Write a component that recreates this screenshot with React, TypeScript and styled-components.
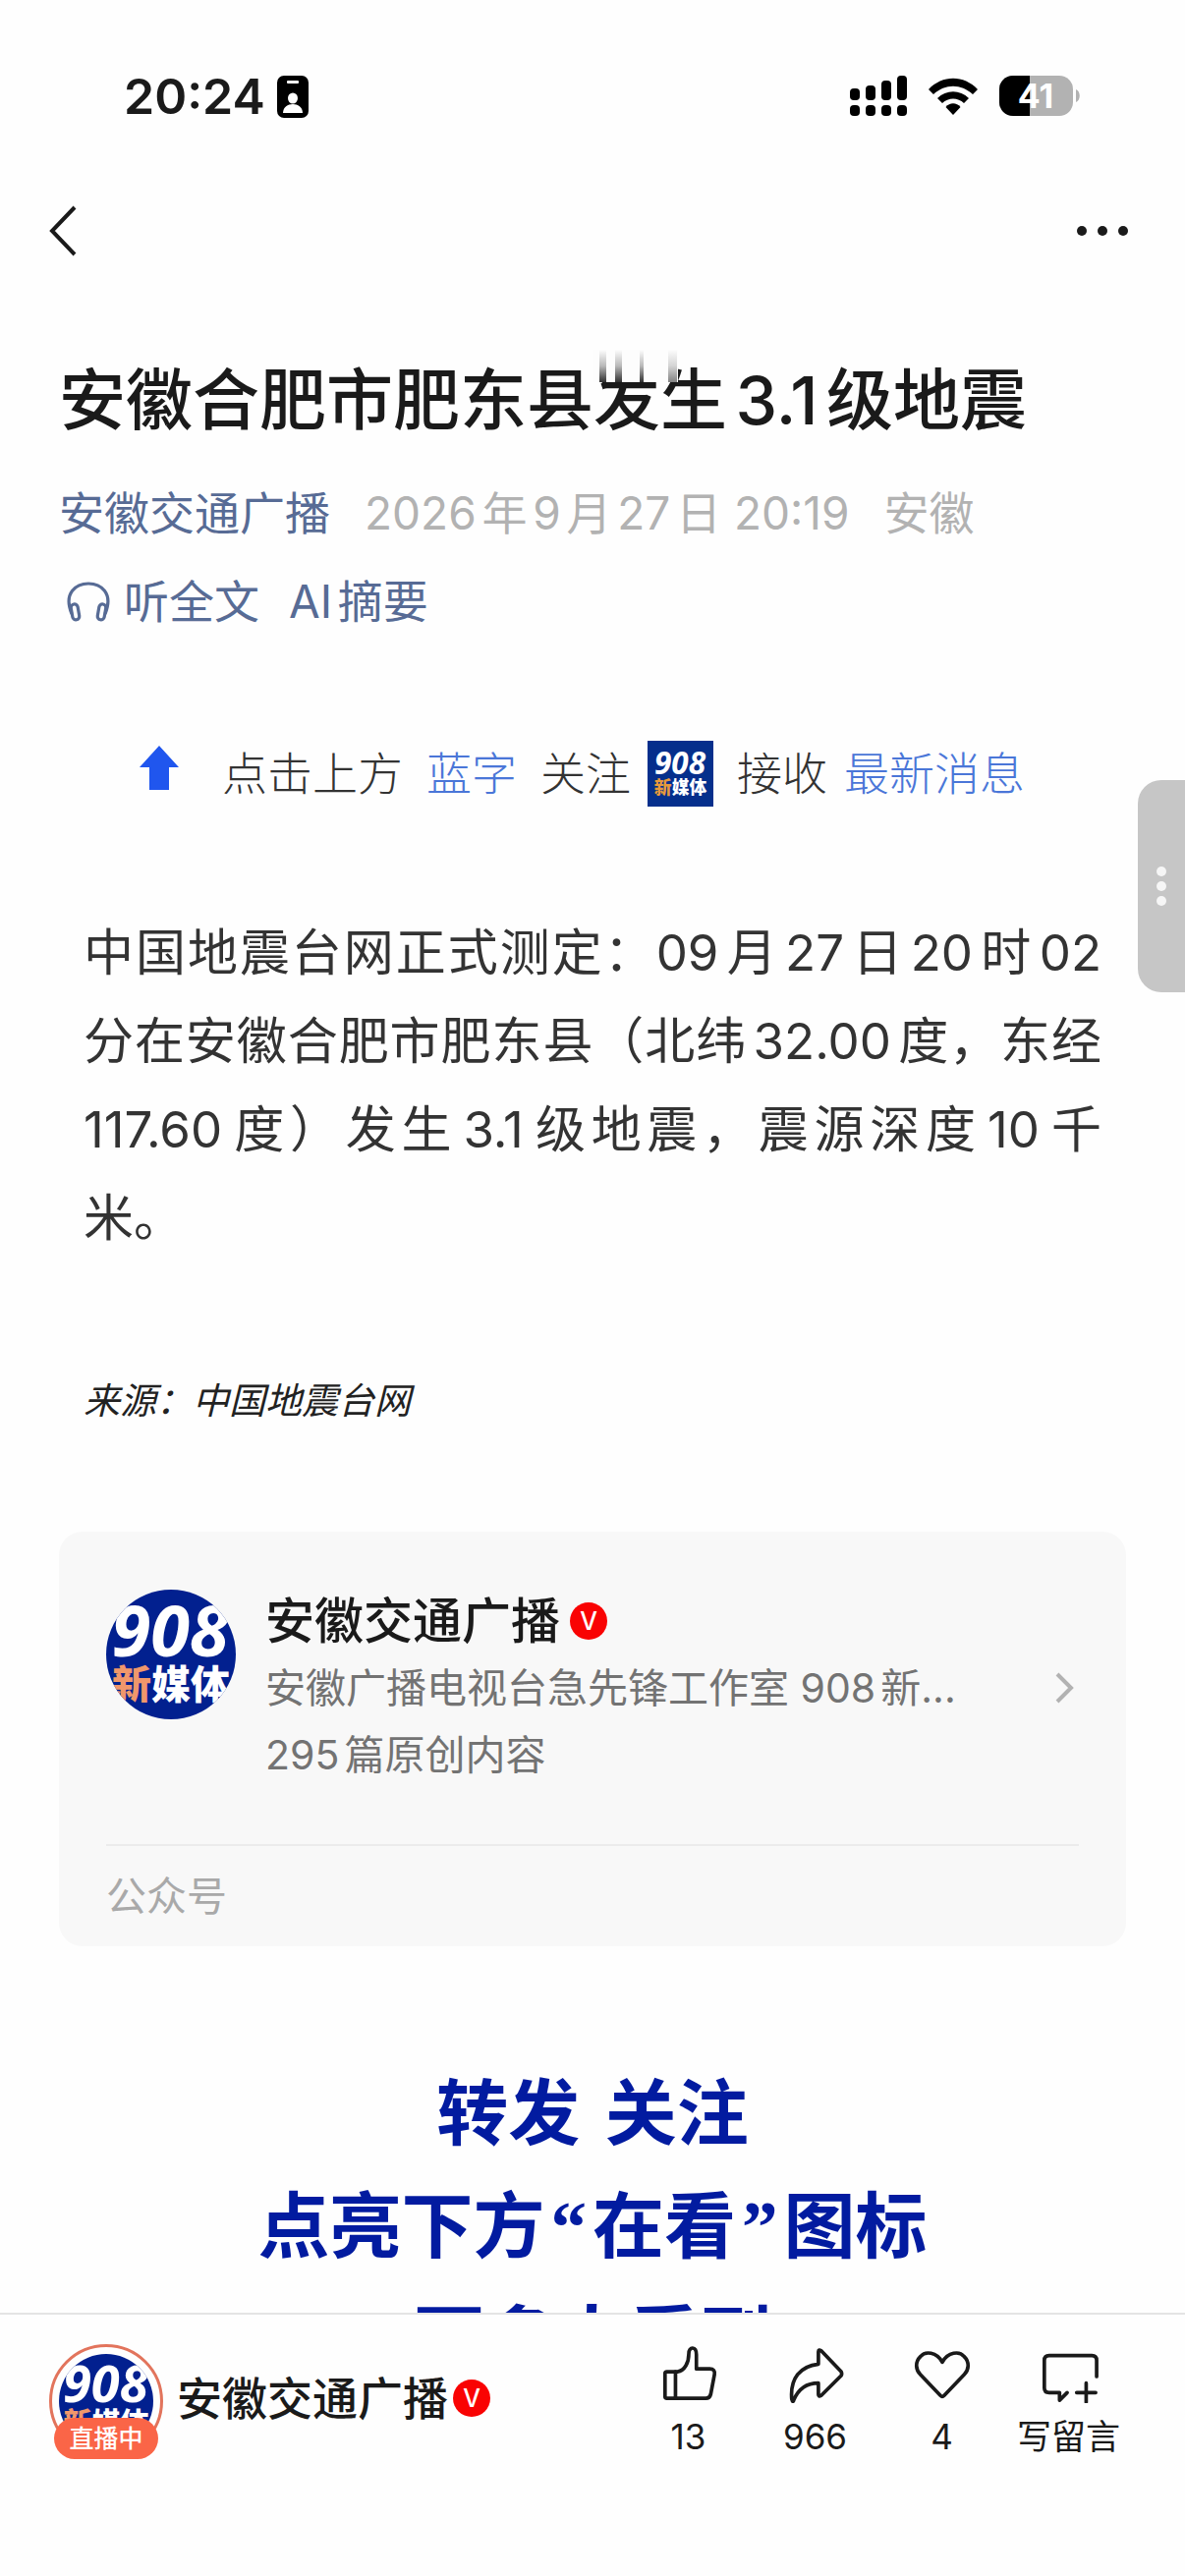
import React from "react";
import styled, { createGlobalStyle } from "styled-components";

const GlobalStyle = createGlobalStyle`
  * { box-sizing: border-box; }
  body {
    margin: 0;
    background: #fefefe;
    color: #1a1a1a;
    font-family: Inter, "Noto Sans CJK SC", sans-serif;
    text-autospace: normal;
  }
  h1, h2, p { margin: 0; font-weight: 400; }
  a { color: inherit; text-decoration: none; }
  button {
    padding: 0;
    border: 0;
    background: none;
    color: inherit;
    font: inherit;
    cursor: pointer;
  }
  svg { display: block; flex: none; }
`;

const Screen = styled.div`
  position: relative;
  display: flex;
  flex-direction: column;
  height: 100vh;
  overflow: hidden;
`;

const StatusBar = styled.div`
  flex: none;
  display: flex;
  align-items: center;
  justify-content: space-between;
  margin-top: 56px;
  padding: 0 106px 0 126px;
  height: 84px;
`;

const StatusGroup = styled.div<{ $gap: number }>`
  display: flex;
  align-items: center;
  gap: ${(p) => p.$gap}px;
`;

const Clock = styled.span`
  font-size: 50px;
  font-weight: 600;
  line-height: 60px;
`;

const NavBar = styled.nav`
  flex: none;
  display: flex;
  align-items: center;
  justify-content: space-between;
  height: 190px;
  padding: 0 48px;
`;

const Scroll = styled.main`
  flex: 1;
  min-height: 0;
  overflow: hidden;
  padding: 34px 60px 0;
`;

const Title = styled.h1`
  position: relative;
  font-size: 68px;
  font-weight: 500;
  line-height: 86px;
  white-space: nowrap;
`;

const Smear = styled.svg`
  position: absolute;
  left: 544px;
  top: -8px;
`;

const Line = styled.div<{ $top: number; $gap: number }>`
  display: flex;
  align-items: center;
  gap: ${(p) => p.$gap}px;
  margin-top: ${(p) => p.$top}px;
  font-size: 46px;
  line-height: 60px;
  white-space: nowrap;
`;

const BlueLink = styled.a`
  color: #576b95;
`;

const Muted = styled.span`
  color: #b2b2b2;
`;

const ToolButton = styled.button`
  display: flex;
  align-items: center;
  gap: 14px;
  color: #576b95;
`;

const Banner = styled.div`
  display: flex;
  align-items: center;
  gap: 24px;
  height: 68px;
  margin-top: 111px;
  padding-left: 82px;
  font-size: 46px;
  line-height: 60px;
  font-weight: 300;
  color: #333;
  white-space: nowrap;
`;

const BannerPair = styled.span`
  display: flex;
  align-items: center;
  gap: 17px;
`;

const Accent = styled.span`
  color: #4a76d8;
`;

const BannerLead = styled.span`
  margin-left: 20px;
`;

const Body = styled.p`
  margin-top: 104px;
  padding: 0 25px;
  font-size: 51px;
  line-height: 90px;
  color: #333;
  text-align: justify;
`;

const Source = styled.p`
  margin-top: 111px;
  padding: 0 25px;
  font-size: 37px;
  font-style: italic;
  line-height: 60px;
  color: #222;
`;

const Card = styled.section`
  margin-top: 103px;
  padding: 0 48px;
  border-radius: 24px;
  background: #f8f8f8;
`;

const CardLink = styled.a`
  display: flex;
  align-items: center;
  padding: 57px 5px 57px 0;
  border-bottom: 2px solid #ebebeb;
`;

const CardAvatar = styled.div`
  align-self: flex-start;
  padding-top: 2px;
`;

const CardText = styled.div`
  flex: 1;
  min-width: 0;
  margin-left: 30px;
  font-size: 41px;
  line-height: 68px;
  color: #737373;
  white-space: nowrap;
`;

const AccountName = styled.h2<{ $size: number; $gap: number }>`
  display: flex;
  align-items: center;
  gap: ${(p) => p.$gap}px;
  font-size: ${(p) => p.$size}px;
  font-weight: 500;
  line-height: 68px;
  color: #1a1a1a;
  white-space: nowrap;
`;

const CardKind = styled.div`
  font-size: 41px;
  line-height: 102px;
  color: #a9a9a9;
`;

const Slogan = styled.p`
  margin-top: 113px;
  font-family: "DejaVu Sans", "Noto Sans CJK SC", sans-serif;
  font-size: 73px;
  font-weight: 700;
  line-height: 115px;
  text-align: center;
  color: #021ba0;
`;

const Quote = styled.span`
  padding: 0 6px;
  font-family: "Liberation Serif", serif;
  line-height: 1;
`;

const BottomBar = styled.footer`
  flex: none;
  display: flex;
  align-items: flex-start;
  justify-content: space-between;
  height: 268px;
  padding: 30px 54px 0 50px;
  border-top: 2px solid #e4e4e4;
`;

const AccountLink = styled.a`
  display: flex;
  align-items: flex-start;
  gap: 14px;
`;

const LiveAvatar = styled.div`
  position: relative;
  display: grid;
  place-items: center;
  width: 116px;
  height: 116px;
  border: 3px solid #e2745c;
  border-radius: 50%;
`;

const LiveBadge = styled.span`
  position: absolute;
  left: 2px;
  right: 2px;
  bottom: -4px;
  border-radius: 21px;
  background: #fa6547;
  color: #fff;
  font-size: 25px;
  font-weight: 500;
  line-height: 42px;
  text-align: center;
`;

const BarName = styled.div`
  padding-top: 21px;
`;

const Actions = styled.div`
  display: grid;
  grid-template-columns: repeat(4, 129px);
`;

const Action = styled.button`
  display: flex;
  flex-direction: column;
  align-items: center;
  gap: 8px;
  font-size: 35px;
  line-height: 52px;
  white-space: nowrap;
`;

const Handle = styled.button`
  position: absolute;
  top: 794px;
  right: 0;
  display: flex;
  flex-direction: column;
  align-items: center;
  justify-content: center;
  gap: 5px;
  width: 48px;
  height: 216px;
  border-radius: 24px 0 0 24px;
  background: #c6c6c6;
`;

const HandleDot = styled.span`
  width: 10px;
  height: 10px;
  border-radius: 50%;
  background: #f6f6f6;
`;

function Logo({ size, square = false }: { size: number; square?: boolean }) {
  const id = "logo-clip-" + size;
  return (
    <svg width={size} height={size} viewBox="0 0 132 132" role="img" aria-label="908新媒体">
      <clipPath id={id}>
        {square ? <rect width="132" height="132" /> : <circle cx="66" cy="66" r="66" />}
      </clipPath>
      <g clipPath={`url(#${id})`}>
        <rect width="132" height="132" fill={square ? "#052f8c" : "#02208f"} />
        <text
          x="65"
          y={square ? 66 : 68}
          textAnchor="middle"
          fontFamily="Open Sans, sans-serif"
          fontStyle="italic"
          fontWeight="700"
          fontSize={square ? 62 : 72}
          fill="#fff"
        >
          908
        </text>
        <text
          x="66"
          y={square ? 107 : 111}
          textAnchor="middle"
          fontFamily="Noto Sans CJK SC, sans-serif"
          fontWeight="900"
          fontSize={square ? 35 : 40}
          fill="#fff"
        >
          <tspan fill={square ? "#e79a3c" : "#f0976b"}>新</tspan>媒体
        </text>
      </g>
    </svg>
  );
}

const VerifiedDot = styled.span`
  display: grid;
  place-items: center;
  width: 38px;
  height: 38px;
  border-radius: 50%;
  background: #f90303;
  color: #fff;
  font-size: 25px;
  font-weight: 500;
  line-height: 38px;
`;

const stroke = {
  fill: "none",
  stroke: "currentColor",
  strokeWidth: 3.8,
  strokeLinecap: "round" as const,
  strokeLinejoin: "round" as const,
};

const actions = [
  {
    label: "13",
    icon: (
      <>
        <path d="M8 29h11c8-1 12-10 12-19 0-8 8-8 8 1v15h14q6 0 5 6l-4 21q-1 4-5 4H8q-2 0-2-2V31q0-2 2-2" />
        <path d="M17 29v28" />
      </>
    ),
  },
  {
    label: "966",
    icon: <path d="M34 21V8q0-3 3-1l21 22q1 2 0 4L37 54q-3 2-3-1V41C22 41 13 47 8 59q-1 3-2-1C4 36 15 23 34 21z" />,
  },
  {
    label: "4",
    icon: <path d="M31 19C25 8 13 7 8 13c-6 6-5 14 0 19l21 22q2 2 4 0l21-22c5-5 6-13 0-19-5-6-17-5-23 6z" />,
  },
  {
    label: "写留言",
    icon: (
      <>
        <path d="M60 34V17q0-5-5-5H10q-5 0-5 5v29q0 5 5 5h11v8l8-8" />
        <path d="M49 41v20M39 51h20" />
      </>
    ),
  },
];

export default function App() {
  return (
    <Screen>
      <GlobalStyle />
      <StatusBar>
        <StatusGroup $gap={12}>
          <Clock>20:24</Clock>
          <svg width="32" height="43" viewBox="0 0 32 43">
            <rect width="32" height="43" rx="7" fill="#000" />
            <rect x="10" y="5" width="12" height="3" rx="1" fill="#fff" />
            <ellipse cx="16" cy="23" rx="5" ry="5.5" fill="#fff" />
            <path d="M6 38c0-12 20-12 20 0z" fill="#fff" />
          </svg>
        </StatusGroup>
        <StatusGroup $gap={22}>
          <svg width="58" height="42" viewBox="0 0 58 42">
            <rect x="0" y="13" width="10" height="12" rx="4" />
            <rect x="16" y="10" width="10" height="15" rx="4" />
            <rect x="32" y="5" width="10" height="20" rx="4" />
            <rect x="48" y="0" width="10" height="25" rx="4" />
            <rect x="0" y="30" width="10" height="11" rx="4" />
            <rect x="16" y="30" width="10" height="11" rx="4" />
            <rect x="32" y="30" width="10" height="11" rx="4" />
            <rect x="48" y="30" width="10" height="11" rx="4" />
          </svg>
          <svg width="50" height="38" viewBox="0 0 50 38">
            <path d="M0 12C14-3 36-3 50 12l-5 5C33 6 17 6 5 17z" />
            <path d="M9 21c9-9 23-9 32 0l-5 5c-6-6-16-6-22 0z" />
            <path d="M17.500 30c4-5 11-5 15 0L25 38z" />
          </svg>
          <svg width="83" height="42" viewBox="0 0 83 42">
            <clipPath id="battery">
              <rect width="75" height="41" rx="14" />
            </clipPath>
            <rect width="75" height="41" rx="14" fill="#b2b2b2" />
            <rect width="31" height="41" clipPath="url(#battery)" />
            <path d="M78 14c5 2 5 11 0 13z" fill="#b2b2b2" />
            <text x="37" y="33" textAnchor="middle" fontSize="34" fontWeight="700" fill="#fff">
              41
            </text>
          </svg>
        </StatusGroup>
      </StatusBar>

      <NavBar>
        <button aria-label="返回">
          <svg width="32" height="54" viewBox="0 0 32 54">
            <path d="M28 3 5 27l23 24" fill="none" stroke="#1a1a1a" strokeWidth="4" />
          </svg>
        </button>
        <button aria-label="更多">
          <svg width="62" height="40" viewBox="0 0 62 40">
            <circle cx="5" cy="20" r="5" fill="#1a1a1a" />
            <circle cx="26" cy="20" r="5" fill="#1a1a1a" />
            <circle cx="47" cy="20" r="5" fill="#1a1a1a" />
          </svg>
        </button>
      </NavBar>

      <Scroll>
        <Title>
          安徽合肥市肥东县发生3.1级地震
          <Smear width="90" height="33" viewBox="0 0 90 33" aria-hidden="true">
            <defs>
              <linearGradient id="smear" x1="0" y1="0" x2="0" y2="1">
                <stop offset="0" stopColor="#1a1a1a" stopOpacity="0" />
                <stop offset="0.5" stopColor="#1a1a1a" stopOpacity="0.3" />
                <stop offset="1" stopColor="#1a1a1a" stopOpacity="0.9" />
              </linearGradient>
            </defs>
            <rect width="86" height="33" fill="#fdfdfd" />
            <rect x="6" width="7" height="33" fill="url(#smear)" />
            <rect x="22" width="7" height="33" fill="url(#smear)" />
            <rect x="47" width="4" height="33" fill="url(#smear)" />
            <rect x="76" width="9" height="33" fill="url(#smear)" opacity="0.6" />
          </Smear>
        </Title>
        <Line $top={42} $gap={35}>
          <BlueLink href="#account">安徽交通广播</BlueLink>
          <Muted>2026年9月27日 20:19</Muted>
          <Muted>安徽</Muted>
        </Line>
        <Line $top={30} $gap={30}>
          <ToolButton>
            <svg width="52" height="42" viewBox="0 0 52 42">
              <g fill="none" stroke="#576b95" strokeWidth="3.200">
                <path d="M13 34C4 12 18 3 30 3s26 9 17 31" />
                <rect x="13" y="24" width="7" height="16" rx="3.500" transform="rotate(-10 16 32)" />
                <rect x="40" y="24" width="7" height="16" rx="3.500" transform="rotate(10 44 32)" />
              </g>
            </svg>
            听全文
          </ToolButton>
          <ToolButton>AI摘要</ToolButton>
        </Line>

        <Banner>
          <svg width="40" height="56" viewBox="0 0 40 56">
            <path d="M20 0 40 22H30V45H10V22H0z" fill="#2056ee" />
          </svg>
          <BannerLead>点击上方</BannerLead>
          <Accent>蓝字</Accent>
          <BannerPair>
            <span>关注</span>
            <Logo size={67} square />
          </BannerPair>
          <BannerPair>
            <span>接收</span>
            <Accent>最新消息</Accent>
          </BannerPair>
        </Banner>

        <Body>
          中国地震台网正式测定：09月27日20时02分在安徽合肥市肥东县（北纬32.00度，东经117.60度）发生3.1级地震，震源深度10千米。
        </Body>
        <Source>来源：中国地震台网</Source>

        <Card>
          <CardLink href="#profile">
            <CardAvatar>
              <Logo size={132} />
            </CardAvatar>
            <CardText>
              <AccountName $size={50} $gap={10}>
                安徽交通广播<VerifiedDot>V</VerifiedDot>
              </AccountName>
              <p>安徽广播电视台急先锋工作室 908新...</p>
              <p>295篇原创内容</p>
            </CardText>
            <svg width="20" height="34" viewBox="0 0 20 34">
              <path d="M3 3l14 14L3 31" fill="none" stroke="#b2b2b2" strokeWidth="4" />
            </svg>
          </CardLink>
          <CardKind>公众号</CardKind>
        </Card>

        <Slogan>
          转发 关注
          <br />
          点亮下方<Quote>“</Quote>在看<Quote>”</Quote>图标
          <br />
          更多人看到
        </Slogan>
      </Scroll>

      <BottomBar>
        <AccountLink href="#live">
          <LiveAvatar>
            <Logo size={96} />
            <LiveBadge>直播中</LiveBadge>
          </LiveAvatar>
          <BarName>
            <AccountName $size={46} $gap={5}>
              安徽交通广播<VerifiedDot>V</VerifiedDot>
            </AccountName>
          </BarName>
        </AccountLink>
        <Actions>
          {actions.map((a) => (
            <Action key={a.label}>
              <svg width="60" height="60" viewBox="0 0 62 62" {...stroke}>
                {a.icon}
              </svg>
              {a.label}
            </Action>
          ))}
        </Actions>
      </BottomBar>

      <Handle aria-label="展开侧栏">
        <HandleDot />
        <HandleDot />
        <HandleDot />
      </Handle>
    </Screen>
  );
}
